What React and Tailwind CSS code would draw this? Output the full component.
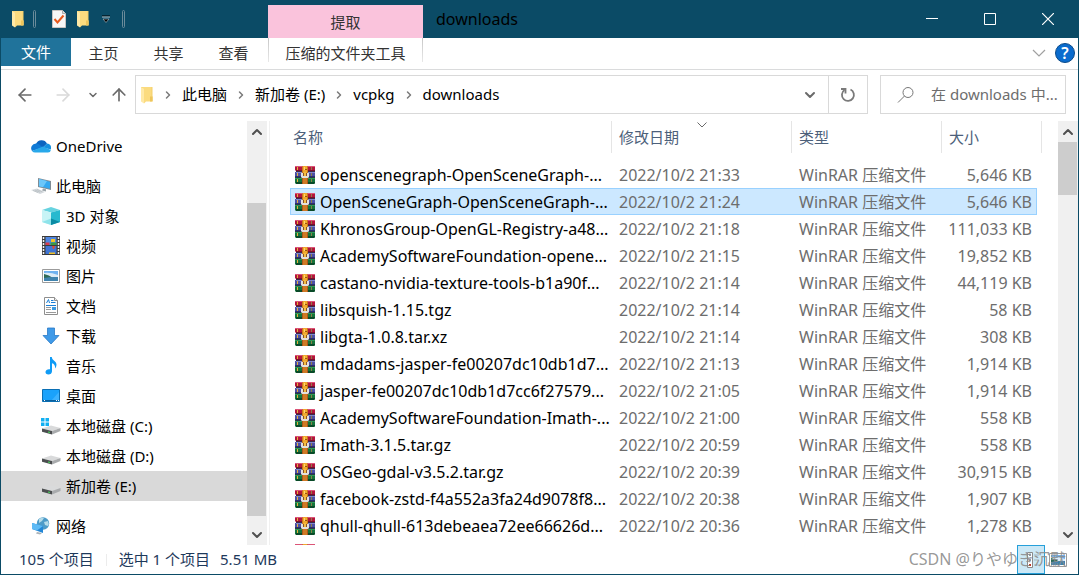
import React, { useState } from 'react';
import { ArrowLeft, ArrowRight, ArrowUp, ChevronDown, ChevronRight, ChevronUp } from 'lucide-react';

const FILES = [
  { name: 'openscenegraph-OpenSceneGraph-...', date: '2022/10/2 21:33', size: '5,646 KB' },
  { name: 'OpenSceneGraph-OpenSceneGraph-...', date: '2022/10/2 21:24', size: '5,646 KB' },
  { name: 'KhronosGroup-OpenGL-Registry-a48...', date: '2022/10/2 21:18', size: '111,033 KB' },
  { name: 'AcademySoftwareFoundation-opene...', date: '2022/10/2 21:15', size: '19,852 KB' },
  { name: 'castano-nvidia-texture-tools-b1a90f...', date: '2022/10/2 21:14', size: '44,119 KB' },
  { name: 'libsquish-1.15.tgz', date: '2022/10/2 21:14', size: '58 KB' },
  { name: 'libgta-1.0.8.tar.xz', date: '2022/10/2 21:14', size: '308 KB' },
  { name: 'mdadams-jasper-fe00207dc10db1d7...', date: '2022/10/2 21:13', size: '1,914 KB' },
  { name: 'jasper-fe00207dc10db1d7cc6f27579...', date: '2022/10/2 21:05', size: '1,914 KB' },
  { name: 'AcademySoftwareFoundation-Imath-...', date: '2022/10/2 21:00', size: '558 KB' },
  { name: 'Imath-3.1.5.tar.gz', date: '2022/10/2 20:59', size: '558 KB' },
  { name: 'OSGeo-gdal-v3.5.2.tar.gz', date: '2022/10/2 20:39', size: '30,915 KB' },
  { name: 'facebook-zstd-f4a552a3fa24d9078f8...', date: '2022/10/2 20:38', size: '1,907 KB' },
  { name: 'qhull-qhull-613debeaea72ee66626d...', date: '2022/10/2 20:36', size: '1,278 KB' },
];

/* ---------- Icons ---------- */

function FolderIcon({ className }) {
  return (
    <svg viewBox="0 0 14 18" className={className}>
      <path d="M1 1h11.500v14H1z" fill="#f3cf6b" />
      <path d="M1 1l3 1.500V17.500l-3-2z" fill="#ffe9a6" />
      <path d="M4 2.500V17.500l2-2h6.500v-5h-1V1H1z" fill="#fbdb7f" />
      <path d="M10 10.500h2.500v5H10z" fill="#edc55c" />
    </svg>
  );
}

function PropertiesIcon() {
  return (
    <svg viewBox="0 0 14 18" className="h-[18px] w-3.5">
      <path d="M.5.5h10l3 3v14H.5z" fill="#f7f7f7" stroke="#c9c4c2" />
      <path d="M10.500.5v3h3" fill="#ddd" stroke="#aaa" />
      <path d="M2.500 9l3 3.500 6-7" fill="none" stroke="#e8591c" strokeWidth="2" />
    </svg>
  );
}

function ArchiveIcon() {
  return (
    <svg viewBox="0 0 20 18" className="h-[18px] w-5 shrink-0">
      <path d="M0 0h20v5H1L0 4z" fill="#b3163c" />
      <path d="M0 0h20v1H0z" fill="#dc5577" />
      <path d="M1 4h19v1H1z" fill="#7c0f2c" />
      <path d="M1 5h19v1H1z" fill="#3b2a4a" />
      <path d="M0 6h20v5H0z" fill="#4c50a4" />
      <path d="M1 6h19v1H1z" fill="#7f86cf" />
      <path d="M0 10h20v1H0z" fill="#2c2f74" />
      <path d="M0 11h20v1H0z" fill="#2a3a44" />
      <path d="M0 12h20v5l-1 1H1l-1-1z" fill="#15733a" />
      <path d="M0 12h20v1H0z" fill="#2f9a56" />
      <path d="M1 16h19v1l-1 1H1z" fill="#0a4a28" />
      <path d="M2 1h1v3H2zM2 7h1v3H2zM2 13h1v3H2z" fill="#e3b03a" />
      <path d="M16 1h1v3h-1zM16 7h1v3h-1zM16 13h1v3h-1z" fill="#8d7f4a" />
      <path d="M7 12h6v6H7z" fill="#a9581b" />
      <path d="M8 12h4v6H8z" fill="#cf7a25" />
      <path d="M7 1l1-1h4l1 1v7H7z" fill="#c9771c" />
      <path d="M8 0h4v7H8z" fill="#f0a92e" />
      <path d="M9 1h1v3H9z" fill="#ffd772" />
      <path d="M10 3h2v1h-2z" fill="#9a560f" />
      <path d="M6 7h2v3h4V7h2v4l-1 1H7l-1-1z" fill="#e4e0dc" />
      <path d="M8 7h4v3H8z" fill="#8a5326" />
      <path d="M9 6h2v4H9z" fill="#f3bc45" />
    </svg>
  );
}

function OneDriveIcon() {
  return (
    <svg viewBox="0 0 20 18" className="h-[18px] w-5">
      <path d="M5 7a6 6 0 0 1 11-.5l-5 5z" fill="#0b64c0" />
      <path d="M5 6.500a4.800 4.800 0 0 0-4 7.500L12 10.500 8.500 7.800A6 6 0 0 0 5 6.500z" fill="#0f7ad6" />
      <path d="M12 10.500l4-4a4.200 4.200 0 0 1 3.800 6z" fill="#1490df" />
      <path d="M1 14l11-4.500 7.800 3.500a2.800 2.800 0 0 1-2.800 2.500H4.500A4 4 0 0 1 1 14z" fill="#28a8ea" />
    </svg>
  );
}

function ComputerIcon() {
  return (
    <svg viewBox="0 0 20 18" className="h-[18px] w-5">
      <path d="M7 1l13 3v9L7 10z" fill="#7f8c95" />
      <path d="M8 2l11 2.700v7L8 9.300z" fill="#35a8f0" />
      <path d="M8 2l8 2-4 6.200-4-.9z" fill="#6cc7fa" />
      <path d="M12 11.500l3 .8v2.200l-4-1z" fill="#9aa3a9" />
      <path d="M0 13l6-1.500 8 3.500-5 2z" fill="#d3d8dc" />
      <path d="M2 13.500l5 2M4 13l5 2.200M6 12.500l5 2.300" stroke="#a9b0b5" strokeWidth=".5" />
    </svg>
  );
}

function CubeIcon() {
  return (
    <svg viewBox="0 0 20 18" className="h-[18px] w-5">
      <path d="M10 0l9 3-9 2.500L1 3z" fill="#67d3e0" />
      <path d="M1 3l9 2.500V18l-9-3z" fill="#c7f4f6" />
      <path d="M10 5.500L19 3v12l-9 3z" fill="#27b9cf" />
      <path d="M1 15l9-3.500V18z" fill="#8fe3ea" />
      <path d="M10 11.500l9 3.500-9 3z" fill="#0b8ba4" />
    </svg>
  );
}

function VideoIcon() {
  return (
    <svg viewBox="-1 0 20 20" className="h-5 w-5">
      <path d="M0 0h18v19H0z" fill="#3b3b3b" />
      <path d="M3.500 1h11v8h-11z" fill="#4f86e0" />
      <path d="M3.500 10h11v8h-11z" fill="#3f74d4" />
      <path d="M3.500 6.500h4V9h-4z" fill="#d93a4b" />
      <path d="M9 3h4v3H9z" fill="#f4c224" />
      <path d="M8.500 6.500h6V9h-6z" fill="#3e9a41" />
      <path d="M10 10l3 0-1 3h-1z" fill="#e34b2d" />
      <path d="M7 16.500h6V18H7z" fill="#f0c12a" />
      <path d="M1.500 1v17M16.500 1v17" stroke="#f2f2f2" strokeWidth="1.500" strokeDasharray="2 1" />
    </svg>
  );
}

function PictureIcon() {
  return (
    <svg viewBox="-1 0 20 14" className="h-3.5 w-5">
      <path d="M.5.5h17v13H.5z" fill="#fff" stroke="#9b9b9b" />
      <path d="M2 2h14v10H2z" fill="#6fb2f0" />
      <path d="M2 4q6-1 14 2v2H2z" fill="#dcecf8" />
      <path d="M2 5q5 1 9 4H2z" fill="#2f6a55" />
      <path d="M2 9q6-1.500 14-1v4H2z" fill="#3f83ae" />
    </svg>
  );
}

function DocumentIcon() {
  return (
    <svg viewBox="0 0 20 18" className="h-[18px] w-5">
      <path d="M3.500.5h10l3 3v14h-13z" fill="#fff" stroke="#8e8e8e" />
      <path d="M13.500.5v3h3" fill="#eee" stroke="#8e8e8e" />
      <path d="M5.500 6L7.500 2.500l1 3.500M10 3.500h2.500M10 5.500h4.500M5 8.500h10" stroke="#1b7fd6" fill="none" />
      <path d="M5 10.500h5M5 12.500h5M5 15.500h10" stroke="#9a9a9a" />
      <path d="M11 10h4v3h-4z" fill="#3c9ae0" />
    </svg>
  );
}

function DownloadIcon() {
  return (
    <svg viewBox="0 0 20 18" className="h-[18px] w-5">
      <path d="M6.500 1h7v7.500H18L10 17 2 8.500h4.500z" fill="#3f9ae8" stroke="#2a7ac6" strokeWidth=".8" />
    </svg>
  );
}

function MusicIcon() {
  return (
    <svg viewBox="0 0 20 18" className="h-[18px] w-5">
      <path d="M9 0h1.800c.3 3.500 4.500 4 4.700 7.500 0 2-.8 3.200-1.500 4 .5-3-1-4.700-3-5.200v7.900c0 2-1.500 3.300-3.600 3.300S4.500 16.300 4.500 15c0-2 2.500-3.300 4.500-2.700z" fill="#109bf5" />
    </svg>
  );
}

function DesktopIcon() {
  return (
    <svg viewBox="-1 0 20 18" className="h-[18px] w-5">
      <path d="M.5 2.500h17v12H.5z" fill="#1aa2fb" stroke="#0a6fb4" />
      <path d="M9 14L17 5v9z" fill="#3cb2ff" />
      <path d="M1 13.500h16" stroke="#0b5f9c" />
      <path d="M2 13.500h1M14 13.500h1M16 13.500h1" stroke="#fff" />
    </svg>
  );
}

function DriveIcon({ system }) {
  return (
    <svg viewBox="-1 0 20 18" className="h-[18px] w-5">
      <path d="M0 11.500L9 8.500l9.500 2.500L10 14z" fill="#d9dadb" />
      <path d="M0 11.500L10 14v3.500L0 14.800z" fill="#4c4f50" />
      <path d="M10 14l8.500-3v3L10 17.500z" fill="#a9abad" />
      <path d="M6 14.500l2 .6v1l-2-.6z" fill="#46e35b" />
      {system && (
        <path d="M-1 1h3.500v3.500H-1zM3.500 1H7v3.500H3.500zM-1 5.500h3.500V9H-1zM3.500 5.500H7V9H3.500z" fill="#12b0f2" />
      )}
    </svg>
  );
}

function NetworkIcon() {
  return (
    <svg viewBox="0 0 20 18" className="h-[18px] w-5">
      <circle cx="12" cy="6.500" r="6.200" fill="#4d9bc8" />
      <path d="M8 2q3-2 5-1l-2 3-3 2zM13 5l4-1q1.500 3 0 5l-3-1z" fill="#b5dcea" />
      <path d="M1 6l11 3v7L1 12z" fill="#2387d6" />
      <path d="M1 6l11 3-6 4.500L1 12z" fill="#5dbaf5" />
      <path d="M6 15l5 1-2 1.500-4-1z" fill="#aab2b8" />
    </svg>
  );
}

const NAV_ITEMS = [
  { label: 'OneDrive', icon: <OneDriveIcon />, root: true },
  { label: '此电脑', icon: <ComputerIcon />, root: true },
  { label: '3D 对象', icon: <CubeIcon /> },
  { label: '视频', icon: <VideoIcon /> },
  { label: '图片', icon: <PictureIcon /> },
  { label: '文档', icon: <DocumentIcon /> },
  { label: '下载', icon: <DownloadIcon /> },
  { label: '音乐', icon: <MusicIcon /> },
  { label: '桌面', icon: <DesktopIcon /> },
  { label: '本地磁盘 (C:)', icon: <DriveIcon system /> },
  { label: '本地磁盘 (D:)', icon: <DriveIcon /> },
  { label: '新加卷 (E:)', icon: <DriveIcon /> },
  { label: '网络', icon: <NetworkIcon />, root: true },
];

/* ---------- Parts ---------- */

function ScrollBar({ offset, size }) {
  return (
    <div className="flex w-5 shrink-0 flex-col bg-[#f0f0f0] text-[#505050]">
      <button aria-label="向上滚动" className="flex h-[21px] w-full shrink-0 items-center justify-center">
        <ChevronUp className="h-4 w-4" strokeWidth={3} />
      </button>
      <div className="min-h-0 flex-1">
        <div style={{ height: `${offset}%` }} />
        <div className="mr-px bg-[#cdcdcd]" style={{ height: `${size}%` }} />
      </div>
      <button aria-label="向下滚动" className="flex h-[21px] w-full shrink-0 items-center justify-center">
        <ChevronDown className="h-4 w-4" strokeWidth={3} />
      </button>
    </div>
  );
}

function TitleBar() {
  return (
    <header className="flex h-[38px] shrink-0 bg-[#0b4b66] pr-px">
      <div className="flex w-[267px] shrink-0 items-center pl-2.5">
        <FolderIcon className="h-[18px] w-3.5" />
        <div className="ml-2 h-[18px] w-[3px] rounded-sm border border-[#6b8b9a]" />
        <button aria-label="属性" className="ml-4">
          <PropertiesIcon />
        </button>
        <button aria-label="新建文件夹" className="ml-2.5">
          <FolderIcon className="h-[18px] w-3.5" />
        </button>
        <button aria-label="自定义快速访问工具栏" className="ml-3">
          <svg viewBox="0 0 8 8" className="h-2 w-2">
            <path d="M0 1h8" stroke="#000" />
            <path d="M0 2h8" stroke="#b9c8cf" />
            <path d="M1 4h6L4 7.500z" fill="#000" stroke="#b9c8cf" strokeWidth=".6" />
          </svg>
        </button>
        <div className="ml-3 h-[18px] w-[3px] rounded-sm border border-[#6b8b9a]" />
      </div>
      <div className="mt-[5px] flex w-[155px] shrink-0 items-center justify-center bg-[#fac3dc] text-[#333]">提取</div>
      <h1 className="flex-1 self-center pl-[13px] text-base leading-5 text-black">downloads</h1>
      <button aria-label="最小化" className="flex w-[58px] items-center justify-center">
        <svg viewBox="0 0 12 12" className="h-3 w-3"><path d="M0 5.500h12" stroke="#fff" /></svg>
      </button>
      <button aria-label="最大化" className="flex w-[58px] items-center justify-center">
        <svg viewBox="0 0 12 12" className="h-3 w-3"><path d="M.5.5h11v11H.5z" fill="none" stroke="#fff" /></svg>
      </button>
      <button aria-label="关闭" className="flex w-[58px] items-center justify-center">
        <svg viewBox="0 0 12 12" className="h-3 w-3"><path d="M0 0l12 12M12 0L0 12" stroke="#fff" strokeWidth="1.200" /></svg>
      </button>
    </header>
  );
}

function Ribbon() {
  return (
    <div className="flex h-8 shrink-0 items-start border-b border-[#dadbdc] text-[#333]">
      <button className="h-7 w-[70px] bg-[#20739b] text-white">文件</button>
      <button className="h-[30px] w-[65px]">主页</button>
      <button className="h-[30px] w-[65px]">共享</button>
      <button className="h-[30px] w-[65px]">查看</button>
      <div className="ml-0.5 flex">
        <div className="h-6 w-px bg-linear-to-b from-[#c8c8c8] to-[#e8e8e8]" />
        <button className="h-[30px] w-[153px]">压缩的文件夹工具</button>
        <div className="h-6 w-px bg-linear-to-b from-[#c8c8c8] to-[#e8e8e8]" />
      </div>
      <div className="ml-auto flex h-[30px] items-center gap-[9px] pr-[3px]">
        <button aria-label="展开功能区">
          <svg viewBox="0 0 14 8" className="h-2 w-3.5"><path d="M1 1l6 6 6-6" fill="none" stroke="#a0a0a0" strokeWidth="1.200" /></svg>
        </button>
        <button aria-label="帮助" className="flex h-5 w-5 items-center justify-center rounded-full border border-[#0b4b8a] bg-[#0a6cce] text-base leading-none font-semibold text-white">
          ?
        </button>
      </div>
    </div>
  );
}

function AddressBar() {
  const crumbs = ['此电脑', '新加卷 (E:)', 'vcpkg', 'downloads'];
  return (
    <div className="flex shrink-0 pt-[5px] pr-3 pb-[7px]">
      <div className="flex w-[134px] shrink-0 items-center text-[#6a6a6a]">
        <button aria-label="后退" className="ml-3.5"><ArrowLeft className="h-5 w-5" /></button>
        <button aria-label="前进" className="ml-[18px] text-[#d9d9d9]"><ArrowRight className="h-5 w-5" /></button>
        <button aria-label="最近浏览的位置" className="ml-3.5"><ChevronDown className="h-3 w-3" strokeWidth={3} /></button>
        <button aria-label="上移" className="ml-2.5"><ArrowUp className="h-5 w-5" /></button>
      </div>
      <div className="flex h-[39px] flex-1 items-center border border-[#d9d9d9]">
        <FolderIcon className="mr-1 ml-1 h-[18px] w-3.5" />
        {crumbs.map((crumb) => (
          <React.Fragment key={crumb}>
            <ChevronRight className="mx-1 h-3 w-3 text-[#7a7a7a]" strokeWidth={3} />
            <button className="px-1 pb-0.5 whitespace-nowrap">{crumb}</button>
          </React.Fragment>
        ))}
        <button aria-label="以前的位置" className="ml-auto flex w-9 items-center justify-center text-[#6a6a6a]">
          <ChevronDown className="h-4 w-4" strokeWidth={3} />
        </button>
        <button aria-label="刷新" className="flex h-full w-[39px] items-center justify-center border-l border-[#d9d9d9]">
          <svg viewBox="0 0 16 16" className="h-4 w-4" fill="none" stroke="#7a7a7a" strokeWidth="1.800">
            <path d="M10.500 2.500a6 6 0 1 1-6 .5" />
            <path d="M1 2h4.500v4.500" />
          </svg>
        </button>
      </div>
      <label className="ml-3 flex h-[39px] w-[186px] shrink-0 items-center border border-[#d9d9d9] pl-4">
        <svg viewBox="0 0 18 18" className="h-[18px] w-[18px] shrink-0" fill="none" stroke="#777">
          <circle cx="11" cy="6.500" r="5" />
          <path d="M7.500 10L1 16.500" />
        </svg>
        <input
          type="text"
          aria-label="搜索"
          placeholder="在 downloads 中..."
          className="ml-4 w-full min-w-0 bg-transparent pb-0.5 outline-none placeholder:text-[#6d6d6d]"
        />
      </label>
    </div>
  );
}

function Sidebar() {
  const [active, setActive] = useState('新加卷 (E:)');

  return (
    <nav className="flex w-[246px] shrink-0 flex-col overflow-hidden pt-2.5">
      {NAV_ITEMS.map((item, i) => (
        <button
          key={item.label}
          onClick={() => setActive(item.label)}
          className={`flex h-[30px] shrink-0 items-center gap-[5px] text-left ${item.root ? 'pl-[30px]' : 'pl-10'} ${item.root && i > 0 ? 'mt-2.5' : ''} ${active === item.label ? 'bg-[#d9d9d9]' : ''}`}
        >
          <span className="w-5 shrink-0">{item.icon}</span>
          {item.label}
        </button>
      ))}
    </nav>
  );
}

function FileTable() {
  const [selected, setSelected] = useState(1);

  return (
    <div className="min-w-0 flex-1 overflow-hidden pr-4 pl-5">
      <table className="w-full table-fixed border-separate border-spacing-0 whitespace-nowrap">
        <colgroup>
          <col />
          <col className="w-[180px]" />
          <col className="w-[150px]" />
          <col className="w-[95px]" />
          <col className="w-[5px]" />
        </colgroup>
        <thead>
          <tr className="h-8 text-left text-[#4c607a]">
            <th className="border-r border-[#e5e5e5] p-0 pl-[3px] font-normal">名称</th>
            <th className="relative border-r border-[#e5e5e5] p-0 pl-[7px] font-normal">
              修改日期
              <svg viewBox="0 0 10 6" className="absolute top-px left-1/2 h-1.5 w-2.5 -translate-x-1/2">
                <path d="M.5.5L5 5 9.500.5" fill="none" stroke="#6a6a6a" />
              </svg>
            </th>
            <th className="border-r border-[#e5e5e5] p-0 pl-[7px] font-normal">类型</th>
            <th className="p-0 pl-[7px] font-normal">大小</th>
            <th className="border-r border-[#e5e5e5] p-0" />
          </tr>
          <tr className="h-2" />
        </thead>
        <tbody>
          {FILES.map((file, i) => {
            const cell = selected === i ? 'border-[#99d1ff] bg-[#cce8ff]' : 'border-transparent';
            return (
              <tr key={file.name} onClick={() => setSelected(i)} className="h-[27px] text-base leading-5 text-[#6d6d6d]">
                <td className={`border-y border-l p-0 pl-1 text-black ${cell}`}>
                  <div className="flex items-center gap-[5px]">
                    <ArchiveIcon />
                    {file.name}
                  </div>
                </td>
                <td className={`border-y p-0 pl-[7px] ${cell}`}>{file.date}</td>
                <td className={`border-y p-0 pl-[7px] ${cell}`}>WinRAR 压缩文件</td>
                <td className={`border-y border-r p-0 pr-1 text-right ${cell}`}>{file.size}</td>
              </tr>
            );
          })}
          {/* next row, cut off by the bottom edge */}
          <tr className="h-[27px]">
            <td className="border border-transparent p-0 pl-1">
              <ArchiveIcon />
            </td>
          </tr>
        </tbody>
      </table>
    </div>
  );
}

function StatusBar() {
  return (
    <footer className="relative flex h-[29px] shrink-0 items-center pl-[18px] text-[#1e395b]">
      <span className="pb-0.5">105 个项目</span>
      <div className="mx-3 h-3 w-px bg-[#ececec]" />
      <span className="pb-0.5">选中 1 个项目</span>
      <span className="ml-2.5 pb-0.5">5.51 MB</span>
      <button aria-label="详细信息" className="ml-auto flex h-[29px] w-7 items-center justify-center border border-[#26a0da] bg-[#cbe8f6]">
        <svg viewBox="0 0 18 16" className="h-4 w-[18px]">
          <path d="M5.500.5h5v15h-5z" fill="#fff" stroke="#8a8a8a" />
          <path d="M7 3h2M7 8h2" stroke="#8f9aa5" strokeWidth="2" />
          <path d="M7 13h2" stroke="#c0392b" strokeWidth="2" />
          <path d="M12 3h5M12 8h5M12 13h5" stroke="#a5b3bb" />
        </svg>
      </button>
      <button aria-label="大图标" className="mr-2.5 ml-[3px]">
        <PictureIcon />
      </button>
      <span className="pointer-events-none absolute right-3 pb-0.5 text-base leading-5 text-[#8c8c8c]/90">CSDN @りやゆき沉默</span>
    </footer>
  );
}

export default function App() {
  return (
    <div className="flex h-screen flex-col overflow-hidden border-x border-b border-[#0b4b66] bg-white font-['Noto_Sans','Noto_Sans_CJK_SC',sans-serif] text-[15px] leading-5 text-black">
      <TitleBar />
      <Ribbon />
      <AddressBar />
      <main className="flex min-h-0 flex-1">
        <Sidebar />
        <ScrollBar offset={16} size={82} />
        <div className="w-[3px] shrink-0 border-r border-[#f0f0f0]" />
        <FileTable />
        <ScrollBar offset={0} size={14} />
      </main>
      <StatusBar />
    </div>
  );
}
